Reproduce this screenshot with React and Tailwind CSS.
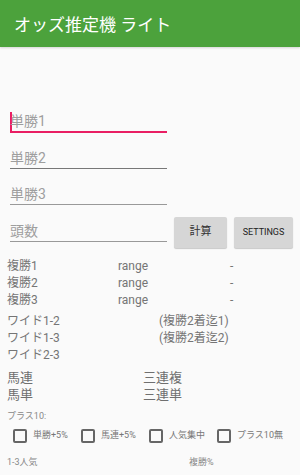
export default function App() {
  const font = { fontFamily: 'Roboto, "Noto Sans CJK JP", sans-serif' };
  const checks = ["単勝+5%", "馬連+5%", "人気集中", "プラス10無"];
  return (
    <div className="w-[300px] h-[475px] bg-[#fafafa] overflow-hidden" style={font}>
      <div className="h-[47px] bg-[#4ca23c] flex items-center px-[14px] pt-[4px] text-white text-[17px] shadow-[0_1px_2px_rgba(0,0,0,0.15)]">
        オッズ推定機 ライト
      </div>
      <div className="pt-[50px]">
        <div className="ml-[10px] w-[157px] h-[36px] flex items-end border-b-2 border-[#e91e63]">
          <div className="flex items-center mb-[0px] h-[20px]">
            <span className="w-[2px] h-[19px] bg-[#e91e63] mr-[-2px]"></span>
            <span className="text-[14px] text-[#9e9e9e] leading-[20px]">単勝1</span>
          </div>
        </div>
        <div className="ml-[10px] w-[157px] h-[36px] flex items-end border-b border-[#777]">
          <span className="text-[14px] text-[#9e9e9e] leading-[20px] mb-[0px]">単勝2</span>
        </div>
        <div className="ml-[10px] w-[157px] h-[36px] flex items-end border-b border-[#999]">
          <span className="text-[14px] text-[#9e9e9e] leading-[20px] mb-[0px]">単勝3</span>
        </div>
        <div className="flex items-start">
          <div className="ml-[10px] w-[157px] h-[37px] flex items-end border-b border-[#999]">
            <span className="text-[14px] text-[#9e9e9e] leading-[20px] mb-[0px]">頭数</span>
          </div>
          <button className="ml-[7px] mt-[12px] w-[53px] h-[31px] bg-[#d6d6d6] rounded-[2px] shadow-[0_1px_1px_rgba(0,0,0,0.2)] text-[11px] text-[#333]">
            計算
          </button>
          <button className="ml-[7px] mt-[12px] w-[59px] h-[31px] bg-[#d6d6d6] rounded-[2px] shadow-[0_1px_1px_rgba(0,0,0,0.2)] text-[9px] text-[#222]">
            SETTINGS
          </button>
        </div>
        <div className="mt-[10px] text-[12px] leading-[17px] text-[#757575]">
          {["複勝1", "複勝2", "複勝3"].map((l) => (
            <div key={l} className="flex">
              <span className="ml-[7px] w-[111px]">{l}</span>
              <span className="w-[112px]">range</span>
              <span>-</span>
            </div>
          ))}
        </div>
        <div className="mt-[4px] text-[12px] leading-[17px] text-[#757575]">
          <div className="flex">
            <span className="ml-[7px] w-[152px]">ワイド1-2</span>
            <span>(複勝2着迄1)</span>
          </div>
          <div className="flex">
            <span className="ml-[7px] w-[152px]">ワイド1-3</span>
            <span>(複勝2着迄2)</span>
          </div>
          <div className="flex">
            <span className="ml-[7px] w-[152px]">ワイド2-3</span>
          </div>
        </div>
        <div className="mt-[5px] text-[13px] leading-[17px] text-[#6f6f6f]">
          <div className="flex">
            <span className="ml-[7px] w-[136px]">馬連</span>
            <span>三連複</span>
          </div>
          <div className="flex">
            <span className="ml-[7px] w-[136px]">馬単</span>
            <span>三連単</span>
          </div>
        </div>
        <div className="mt-[6px] ml-[7px] text-[9px] leading-[14px] text-[#888]">プラス10:</div>
        <div className="mt-[5px] flex items-center h-[16px]">
          {checks.map((c, i) => (
            <div key={c} className={`flex items-center ${i === 0 ? "ml-[13px]" : ""} w-[68px]`}>
              <span className="w-[14px] h-[14px] border-2 border-[#666] rounded-[2px]"></span>
              <span className="ml-[6px] text-[9px] text-[#777]">{c}</span>
            </div>
          ))}
        </div>
        <div className="mt-[11px] flex text-[9px] leading-[14px] text-[#888]">
          <span className="ml-[7px] w-[182px]">1-3人気</span>
          <span>複勝%</span>
        </div>
      </div>
    </div>
  );
}
